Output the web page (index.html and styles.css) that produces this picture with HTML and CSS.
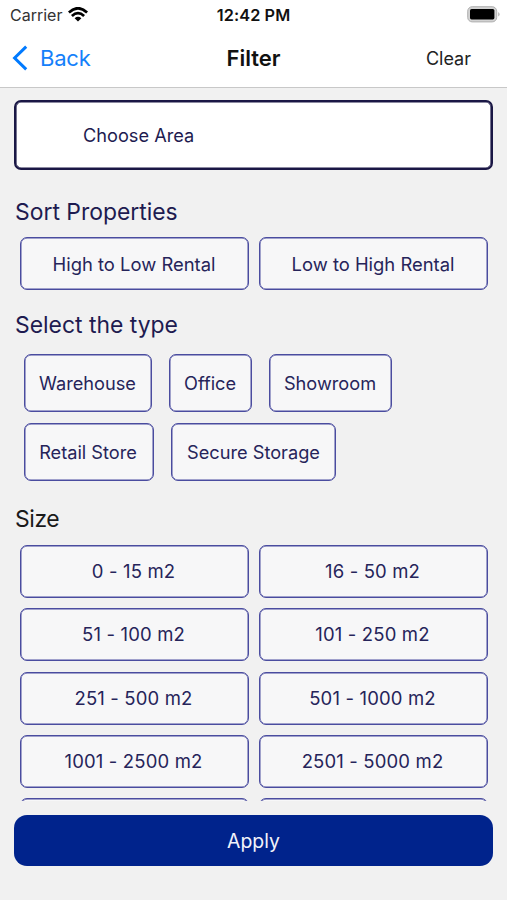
FILE: index.html
```html
<!DOCTYPE html>
<html lang="en">
<head>
<meta charset="utf-8">
<title>Filter</title>
<link rel="stylesheet" href="styles.css">
</head>
<body>
<div class="screen">
  <header class="top">
    <div class="status">
      <div class="carrier"><span>Carrier</span>
        <svg width="20" height="15" viewBox="0 0 20 15"><path d="M.9 5.4Q10-2.9 19.1 5.4M3.9 8.9Q10 3.3 16.1 8.9" fill="none" stroke="#000" stroke-width="2.7"/><path d="M6.6 11.2Q10 8.4 13.4 11.2L10 14.5Z"/></svg>
      </div>
      <div class="time">12:42 PM</div>
      <div class="battery">
        <svg width="34" height="17" viewBox="0 0 34 17"><rect x=".7" y=".7" width="29" height="15.2" rx="4.5" fill="#d2d2d2" stroke="#b0b0b0"/><rect x="3" y="3" width="24.4" height="10.4" rx="1.6"/><path d="M31.3 6q2.6 2.3 0 4.6z" fill="#a6a6a6"/></svg>
      </div>
    </div>
    <nav class="nav">
      <div class="back"><svg width="17" height="28" viewBox="0 0 17 28"><path d="M15.2 2.6L3.6 14L15.2 25.4" fill="none" stroke="#007aff" stroke-width="3"/></svg><span>Back</span></div>
      <h1>Filter</h1>
      <div class="clear">Clear</div>
    </nav>
  </header>
  <main class="content">
    <div class="area">Choose Area</div>
    <h2 class="h-sort">Sort Properties</h2>
    <div class="grid"><button>High to Low Rental</button><button>Low to High Rental</button></div>
    <h2 class="h-type">Select the type</h2>
    <div class="types">
      <div class="row"><button class="w1">Warehouse</button><button class="w2">Office</button><button class="w3">Showroom</button></div>
      <div class="row"><button class="w4">Retail Store</button><button class="w5">Secure Storage</button></div>
    </div>
    <h2 class="h-size">Size</h2>
    <div class="grid sizes">
      <button>0 - 15 m2</button><button>16 - 50 m2</button>
      <button>51 - 100 m2</button><button>101 - 250 m2</button>
      <button>251 - 500 m2</button><button>501 - 1000 m2</button>
      <button>1001 - 2500 m2</button><button>2501 - 5000 m2</button>
      <button></button><button></button>
    </div>
  </main>
  <footer><button class="apply">Apply</button></footer>
</div>
</body>
</html>
```
FILE: styles.css
```css
* { box-sizing: border-box; }
body { margin: 0; font-family: Inter, "Liberation Sans", sans-serif; }
button { font: inherit; padding: 0; margin: 0; white-space: nowrap; }
.screen { width: 507px; height: 900px; background: #f1f1f1; display: flex; flex-direction: column; overflow: hidden; }
.top { height: 88px; background: #fff; border-bottom: 1px solid #c8c8c8; flex: none; }
.status { height: 29px; display: grid; grid-template-columns: 1fr 1fr 1fr; align-items: center; padding: 0 6px 0 10px; font-size: 16px; }
.carrier { display: flex; align-items: center; gap: 6px; color: #333; }
.time { text-align: center; font-weight: 600; font-size: 16.3px; color: #111; letter-spacing: .1px; position: relative; left: -2px; }
.battery { display: flex; justify-content: flex-end; }
.nav { height: 57px; display: grid; grid-template-columns: 1fr 1fr 1fr; align-items: center; }
.back { display: flex; align-items: center; gap: 12px; padding-left: 11px; font-size: 22px; letter-spacing: -.2px; color: #1480fa; }
.nav h1 { margin: 0; font-size: 22px; font-weight: 600; text-align: center; color: #111; }
.clear { font-size: 18px; text-align: right; padding: 1px 36px 0 0; color: #222; }
.content { height: 713px; padding: 12px 14px 0; overflow: hidden; flex: none; color: #1e1b50; }
.area { height: 70px; border: 2px solid #1a1745; box-shadow: inset 0 0 0 .6px #1a1745; border-radius: 7px; background: #fff; padding-left: 67px; display: flex; align-items: center; font-size: 18.2px; }
h2 { margin: 0; font-size: 22.9px; font-weight: 400; line-height: 28px; padding-left: 1px; }
.h-sort { padding-top: 28px; height: 67px; }
.h-type { padding-top: 21px; height: 64px; }
.h-size { padding-top: 24px; height: 64px; color: #1a1a1a; letter-spacing: -.4px; }
.grid { display: grid; grid-template-columns: 229px 229px; grid-auto-rows: 53px; column-gap: 10px; row-gap: 10.33px; padding-left: 6px; }
.grid button, .row button { border: 1px solid #4a4c9f; box-shadow: inset 0 0 0 .5px #4a4c9f; border-radius: 7px; background: #f7f7f8; color: #26245a; font-size: 18.2px; }
.grid button { font-size: 18.4px; padding-right: 1px; }
.grid.sizes button { font-size: 18.5px; letter-spacing: .15px; padding: 0 2px 1px 0; }
.types { display: flex; flex-direction: column; gap: 11px; padding-left: 10px; }
.row { display: flex; gap: 17px; }
.row button { height: 58px; padding-right: 1px; }
.w1 { width: 128px; }
.w2 { width: 83px; }
.w3 { width: 123px; }
.row .w4 { width: 130px; padding-right: 2px; }
.row .w5 { width: 165px; padding-right: 0; }
footer { padding: 14px 14px 0; }
.apply { width: 479px; height: 51px; border: 0; border-radius: 13px; background: #00238c; color: #f2f3fa; font-size: 19.4px; }
```
